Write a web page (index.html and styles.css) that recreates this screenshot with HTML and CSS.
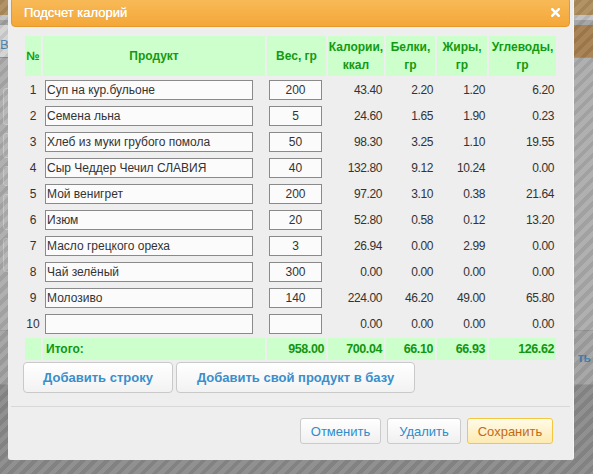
FILE: index.html
```html
<!DOCTYPE html>
<html lang="ru">
<head>
<meta charset="utf-8">
<title>Подсчет калорий</title>
<link rel="stylesheet" href="styles.css">
</head>
<body>
<div class="page">
  <div class="topbar"></div>
  <div class="navbar"></div>
  <div class="band"><span class="band-text">Ве</span><span class="band-spacer"></span></div>
  <div class="content">
    <div class="side-boxes">
      <div class="sbox b1"></div>
      <div class="sbox b2"></div>
      <div class="sbox b3"></div>
      <div class="sbox b4"></div>
      <div class="sbox b5"></div>
    </div>
  </div>
  <div class="lower"><span class="lower-text">ть</span></div>
  <div class="foot"></div>
</div>
<div class="overlay"></div>

<div class="dialog">
  <div class="dlg-header">
    <span class="dlg-title">Подсчет калорий</span>
    <svg class="dlg-close" width="9" height="9" viewBox="0 0 9 9"><path d="M1.2 1.2 L7.8 7.8 M7.8 1.2 L1.2 7.8" stroke="#fff" stroke-width="2.4" stroke-linecap="square"/></svg>
  </div>
  <div class="dlg-body">
    <table class="calc">
      <thead>
        <tr>
          <th class="c-num">№</th>
          <th class="c-prod">Продукт</th>
          <th class="c-w">Вес, гр</th>
          <th class="c-cal">Калории,<br>ккал</th>
          <th class="c-p">Белки,<br>гр</th>
          <th class="c-f">Жиры,<br>гр</th>
          <th class="c-c">Углеводы,<br>гр</th>
        </tr>
      </thead>
      <tbody>
        <tr><td class="idx">1</td><td><input class="in-prod" value="Суп на кур.бульоне"></td><td><input class="in-w" value="200"></td><td class="n">43.40</td><td class="n">2.20</td><td class="n">1.20</td><td class="n">6.20</td></tr>
        <tr><td class="idx">2</td><td><input class="in-prod" value="Семена льна"></td><td><input class="in-w" value="5"></td><td class="n">24.60</td><td class="n">1.65</td><td class="n">1.90</td><td class="n">0.23</td></tr>
        <tr><td class="idx">3</td><td><input class="in-prod" value="Хлеб из муки грубого помола"></td><td><input class="in-w" value="50"></td><td class="n">98.30</td><td class="n">3.25</td><td class="n">1.10</td><td class="n">19.55</td></tr>
        <tr><td class="idx">4</td><td><input class="in-prod" value="Сыр Чеддер Чечил СЛАВИЯ"></td><td><input class="in-w" value="40"></td><td class="n">132.80</td><td class="n">9.12</td><td class="n">10.24</td><td class="n">0.00</td></tr>
        <tr><td class="idx">5</td><td><input class="in-prod" value="Мой венигрет"></td><td><input class="in-w" value="200"></td><td class="n">97.20</td><td class="n">3.10</td><td class="n">0.38</td><td class="n">21.64</td></tr>
        <tr><td class="idx">6</td><td><input class="in-prod" value="Изюм"></td><td><input class="in-w" value="20"></td><td class="n">52.80</td><td class="n">0.58</td><td class="n">0.12</td><td class="n">13.20</td></tr>
        <tr><td class="idx">7</td><td><input class="in-prod" value="Масло грецкого ореха"></td><td><input class="in-w" value="3"></td><td class="n">26.94</td><td class="n">0.00</td><td class="n">2.99</td><td class="n">0.00</td></tr>
        <tr><td class="idx">8</td><td><input class="in-prod" value="Чай зелёный"></td><td><input class="in-w" value="300"></td><td class="n">0.00</td><td class="n">0.00</td><td class="n">0.00</td><td class="n">0.00</td></tr>
        <tr><td class="idx">9</td><td><input class="in-prod" value="Молозиво"></td><td><input class="in-w" value="140"></td><td class="n">224.00</td><td class="n">46.20</td><td class="n">49.00</td><td class="n">65.80</td></tr>
        <tr><td class="idx">10</td><td><input class="in-prod" value=""></td><td><input class="in-w" value=""></td><td class="n">0.00</td><td class="n">0.00</td><td class="n">0.00</td><td class="n">0.00</td></tr>
      </tbody>
      <tfoot>
        <tr class="total"><td></td><td class="t-label">Итого:</td><td class="n">958.00</td><td class="n">700.04</td><td class="n">66.10</td><td class="n">66.93</td><td class="n">126.62</td></tr>
      </tfoot>
    </table>
    <div class="add-row">
      <button class="btn-add add-line">Добавить строку</button>
      <button class="btn-add add-base">Добавить свой продукт в базу</button>
    </div>
  </div>
  <div class="dlg-sep"></div>
  <div class="dlg-footer">
    <button class="btn btn-cancel">Отменить</button>
    <button class="btn btn-del">Удалить</button>
    <button class="btn btn-save">Сохранить</button>
  </div>
</div>
</body>
</html>
```
FILE: styles.css
```css
* { box-sizing: border-box; }
html, body { margin: 0; padding: 0; }
body {
  width: 593px;
  height: 474px;
  overflow: hidden;
  font-family: "Liberation Sans", Arial, sans-serif;
  background: #8a8a8a;
  position: relative;
}

/* underlying page (dimmed) */
.page { display: flex; flex-direction: column; height: 474px; }
.topbar { height: 15px; background: #ae8f60; }
.navbar { height: 10px; background: linear-gradient(#c2c2c2 0 5px, #a3a3a3 5px); }
.band {
  height: 33px;
  display: flex;
  background: linear-gradient(90deg, #d3d3d3 0 12px, #a67f50 12px);
  border-bottom: 1px solid #b08a58;
}
.band-text { color: #4f86ad; font-size: 13px; padding: 12px 0 0 0; }
.content { height: 272px; background: #adadad; display: flex; }
.side-boxes { display: flex; flex-direction: column; gap: 8px; padding: 30px 0 0 3px; }
.sbox { width: 20px; border: 1px solid #c6c6c6; border-radius: 3px; background: #b4b4b4; }
.b1 { height: 37px; } .b2 { height: 25px; } .b3 { height: 20px; } .b4 { height: 36px; } .b5 { height: 34px; }
.lower {
  height: 55px;
  background: #a4a4a4;
  border-top: 1px solid #979797;
  border-bottom: 1px solid #979797;
  display: flex;
  justify-content: flex-end;
  padding: 20px 2px 0 0;
}
.lower-text { color: #3f7fae; font-weight: bold; font-size: 12px; }
.foot { flex: 1; background: #8c8c8c; }

.overlay {
  position: absolute;
  inset: 0;
  background: repeating-linear-gradient(135deg, rgba(0,0,0,0.07) 0 4px, rgba(255,255,255,0.04) 4px 8.5px);
}

/* dialog */
.dialog {
  position: absolute;
  left: 8px;
  top: -3px;
  width: 566px;
  height: 463px;
  background: #eeeeee;
  padding: 0 3px;
  border-right: 1px solid #f6f6f6;
  border-radius: 0 0 3px 3px;
  display: flex;
  flex-direction: column;
}
.dlg-header {
  height: 30px;
  flex: none;
  background: linear-gradient(#f8bb58, #f4a739);
  border: 1px solid #e6982a;
  border-radius: 4px;
  display: flex;
  align-items: center;
  justify-content: space-between;
  padding: 0 9px 0 12px;
}
.dlg-title { color: #fff; font-size: 13px; text-shadow: 0 0 0.4px #fff; }
.dlg-close { display: block; }

.dlg-body { padding: 7px 12px 0 12px; }
.calc {
  border-collapse: separate;
  border-spacing: 2px;
  table-layout: fixed;
  width: 535px;
}
.calc th {
  background: #ccffcc;
  color: #139a13;
  font-weight: bold;
  font-size: 12px;
  line-height: 18px;
  height: 40px;
  padding: 0;
  text-align: center;
  vertical-align: middle;
}
.c-num { width: 16px; }
.c-prod { width: 222px; }
.c-w { width: 59px; }
.c-cal { width: 56px; }
.c-p { width: 49px; }
.c-f { width: 50px; }
.c-c { width: 67px; }

.calc td {
  height: 24px;
  padding: 0;
  color: #333;
  font-size: 12px;
  vertical-align: middle;
}
.calc td.idx { text-align: center; }
.calc td.n { text-align: right; padding-right: 2px; letter-spacing: -0.4px; }
.calc input {
  display: block;
  height: 20px;
  margin: 0 0 0 2px;
  border: 1px solid #8a8a8a;
  background: #fbfbfb;
  font-family: "Liberation Sans", Arial, sans-serif;
  font-size: 12px;
  color: #333;
  padding: 0 1px;
  border-radius: 0;
  outline: none;
}
.in-prod { width: 208px; }
.in-w { width: 53px; text-align: center; }

.calc tr.total td {
  height: 22px;
  background: #ccffcc;
  color: #129612;
  font-weight: bold;
  font-size: 12.5px;
}
.calc tr.total td.t-label { padding-left: 3px; font-size: 12px; }

.add-row { display: flex; gap: 3px; }
.btn-add {
  height: 31px;
  border: 1px solid #c9c9c9;
  border-radius: 4px;
  background: linear-gradient(#ffffff, #f2f2f2);
  color: #3a8ecb;
  font-family: "Liberation Sans", Arial, sans-serif;
  font-weight: bold;
  font-size: 13px;
  padding: 0;
}
.add-line { width: 150px; }
.add-base { width: 239px; }

.dlg-sep { margin-top: 13px; border-top: 1px solid #d8d8d8; }
.dlg-footer {
  display: flex;
  justify-content: flex-end;
  gap: 6px;
  padding: 11px 17px 0 0;
}
.btn {
  height: 26px;
  border: 1px solid #cbcbcb;
  border-radius: 3px;
  background: linear-gradient(#ffffff, #f0f0f0);
  color: #2d8dcc;
  font-family: "Liberation Sans", Arial, sans-serif;
  font-size: 13px;
  padding: 0;
}
.btn-cancel { width: 81px; }
.btn-del { width: 74px; }
.btn-save {
  width: 86px;
  background: linear-gradient(#fffbe9, #fdeab2);
  border-color: #f3c840;
  color: #c56a14;
}
```
